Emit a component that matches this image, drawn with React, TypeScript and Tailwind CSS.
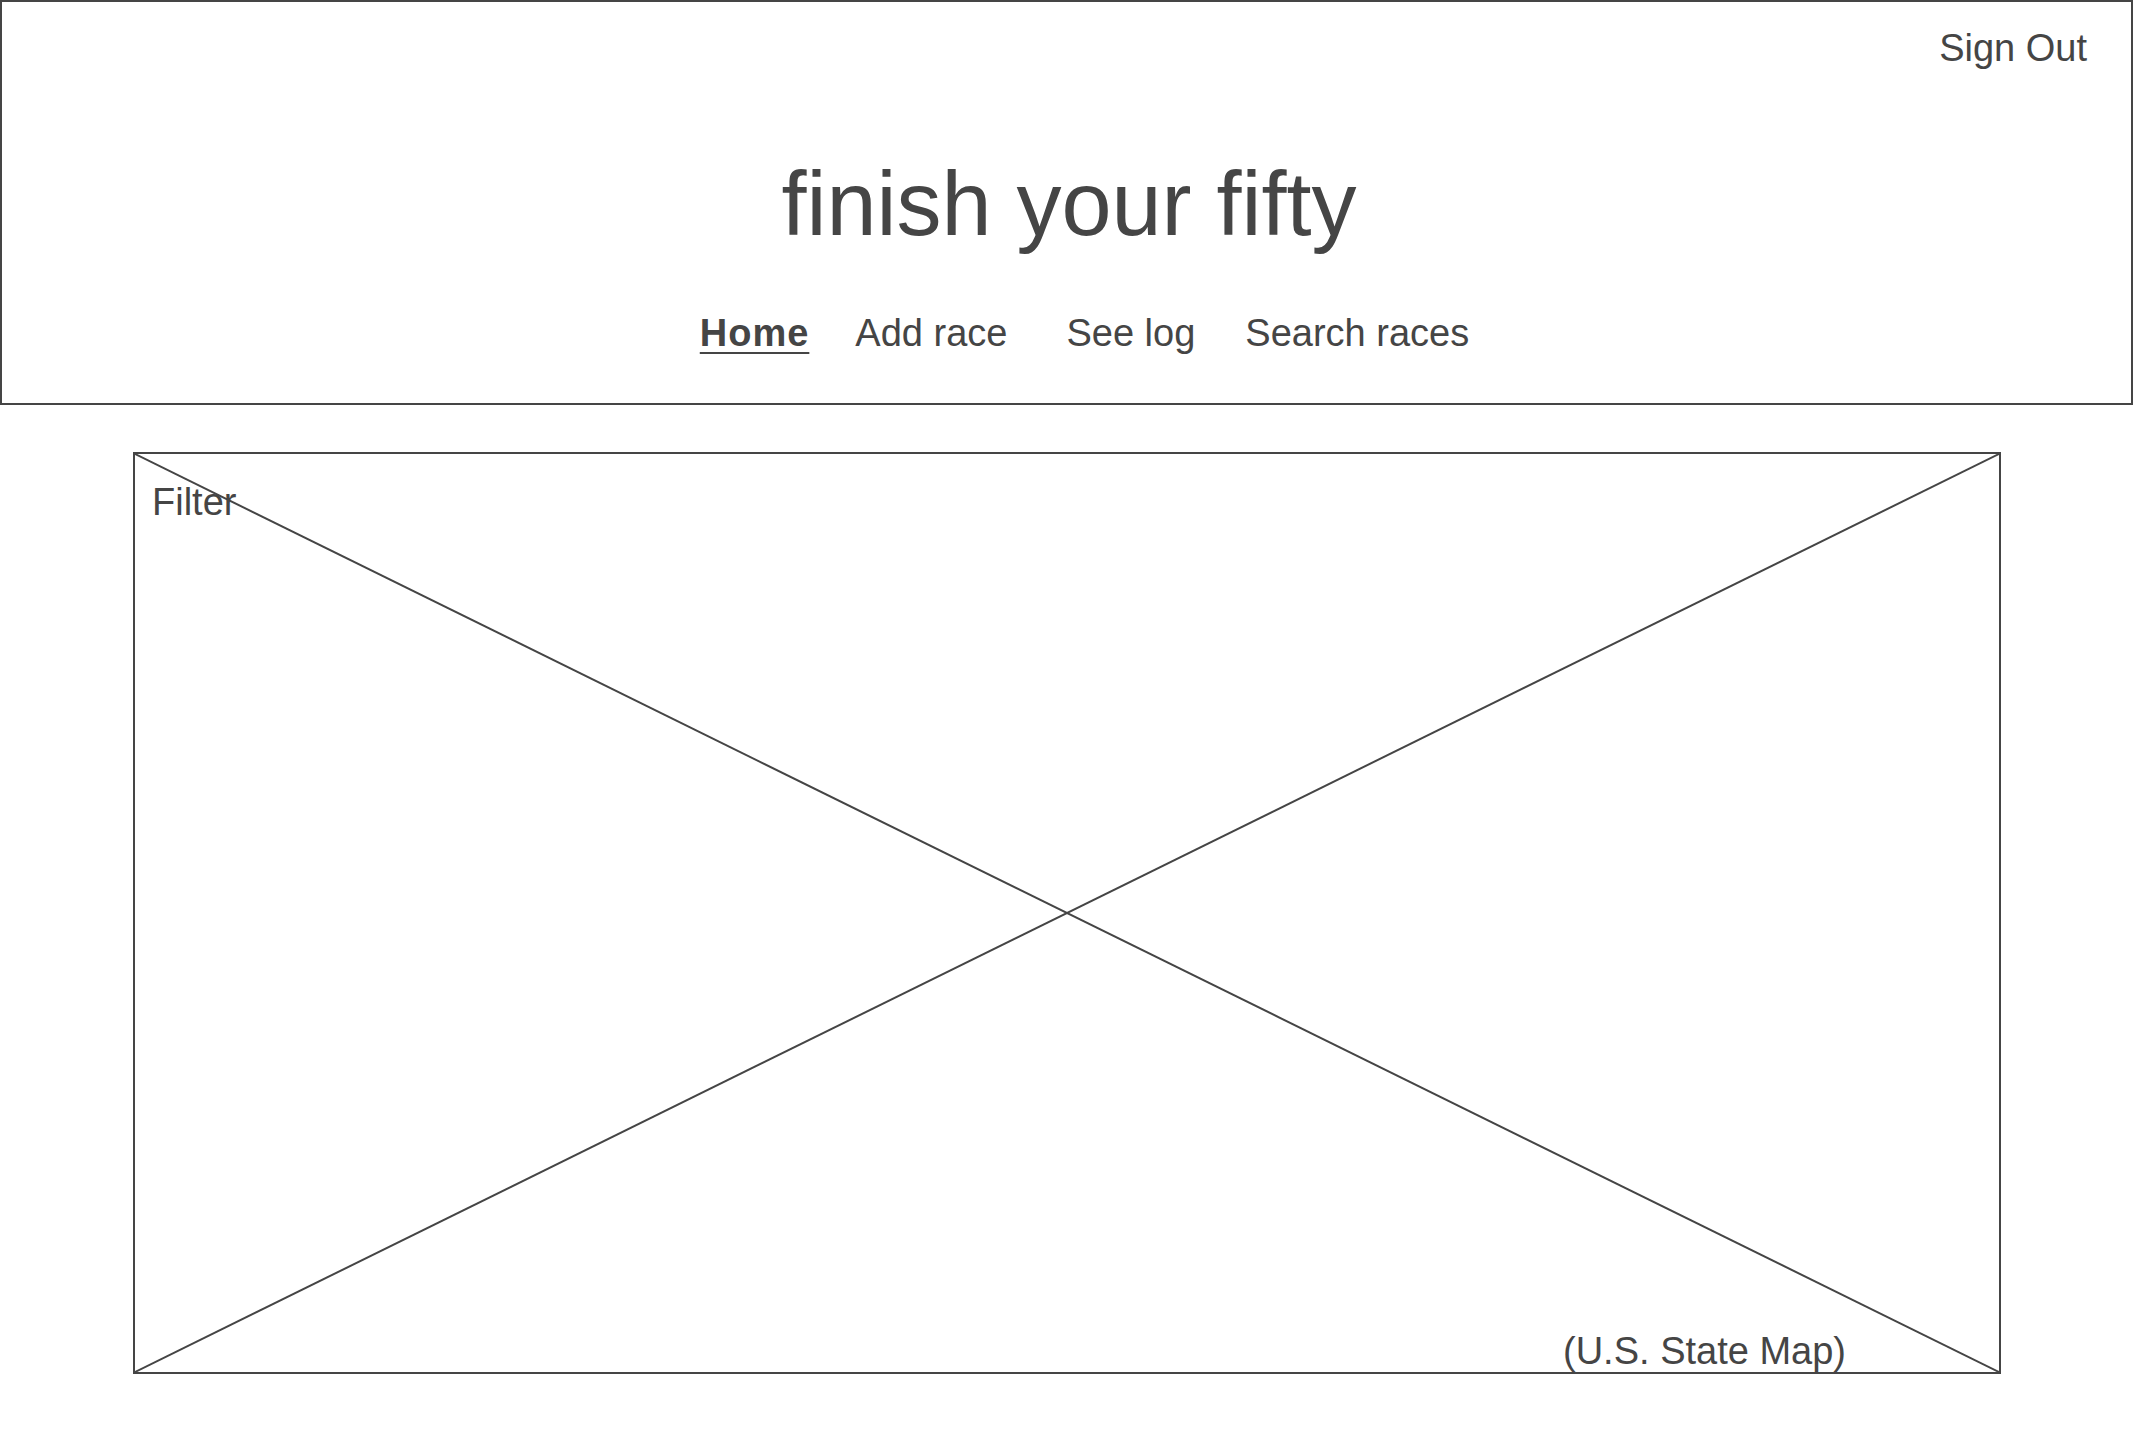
export default function App() {
  const font = { fontFamily: '"Liberation Sans", Arial, sans-serif' };
  return (
    <div className="w-[2133px] h-[1429px] bg-white text-[#454545]" style={font}>
      <header className="h-[405px] border-2 border-[#454545] flex flex-col">
        <div className="flex justify-end pr-[44px] pt-[24px]">
          <span className="text-[38px] leading-[44px]">Sign Out</span>
        </div>
        <h1 className="mt-[84px] pl-[5px] text-center text-[90px] leading-[100px]">finish your fifty</h1>
        <nav className="mt-[57px] pl-[36px] flex justify-center text-[38px] leading-[44px]">
          <span className="font-bold underline underline-offset-[6px] decoration-2 tracking-[1px]">Home</span>
          <span className="ml-[46px]">Add race</span>
          <span className="ml-[59px]">See log</span>
          <span className="ml-[50px]">Search races</span>
        </nav>
      </header>
      <main className="relative mt-[47px] ml-[133px] w-[1868px] h-[922px] border-2 border-[#454545] flex flex-col justify-between">
        <svg className="absolute inset-0 w-full h-full" viewBox="0 0 100 100" preserveAspectRatio="none">
          <line x1="0" y1="0" x2="100" y2="100" stroke="#454545" strokeWidth="2" vectorEffect="non-scaling-stroke" />
          <line x1="100" y1="0" x2="0" y2="100" stroke="#454545" strokeWidth="2" vectorEffect="non-scaling-stroke" />
        </svg>
        <div className="relative pl-[17px] pt-[26px] text-[38px] leading-[44px]">Filter</div>
        <div className="relative flex justify-end pr-[153px] text-[38px] leading-[44px] -mb-[1px]">(U.S. State Map)</div>
      </main>
    </div>
  );
}
